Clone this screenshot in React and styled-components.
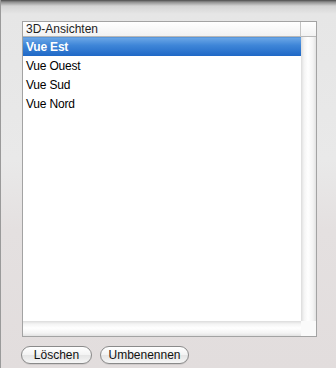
import React from 'react'
import styled, { createGlobalStyle } from 'styled-components'

const GlobalStyle = createGlobalStyle`
  html, body {
    margin: 0;
    padding: 0;
  }
  body {
    font-family: "Lucida Grande", "Liberation Sans", Arial, sans-serif;
  }
`

const views = ['Vue Est', 'Vue Ouest', 'Vue Sud', 'Vue Nord']

const Window = styled.div`
  width: 336px;
  height: 368px;
  box-sizing: border-box;
  padding: 21px 0 0 21px;
  overflow: hidden;
  background: linear-gradient(
    180deg,
    #4a4a4a 0px,
    #8e8e8e 2px,
    #d4d4d4 6px,
    #e6e6e6 14px,
    #e9e9e9 160px,
    #e4e0e0 230px,
    #e2dddd 368px
  );
  border-left: 1px solid #9a9a9a;
`

const ListBox = styled.div`
  width: 295px;
  height: 316px;
  box-sizing: border-box;
  border: 1px solid #a3a3a3;
  background: #fff;
  display: grid;
  grid-template-columns: 1fr 15px;
  grid-template-rows: 15px 1fr 15px;
`

const Header = styled.div`
  display: flex;
  align-items: center;
  padding-left: 3px;
  font-size: 12px;
  color: #1e1e1e;
  background: linear-gradient(180deg, #ffffff, #f2f2f2);
  border-bottom: 1px solid #b8b8b8;
  border-right: 1px solid #c4c4c4;
`

const Corner = styled.div`
  background: ${(p) => (p.$bottom ? '#fafafa' : 'linear-gradient(180deg, #ffffff, #f2f2f2)')};
  border-bottom: 1px solid ${(p) => (p.$bottom ? 'transparent' : '#b8b8b8')};
`

const Rows = styled.div`
  display: flex;
  flex-direction: column;
`

const Row = styled.div`
  height: 19px;
  box-sizing: border-box;
  display: flex;
  align-items: center;
  padding-left: 3px;
  font-size: 12px;
  letter-spacing: -0.2px;
  color: ${(p) => (p.$selected ? '#fff' : '#000')};
  font-weight: ${(p) => (p.$selected ? 700 : 400)};
  background: ${(p) =>
    p.$selected
      ? 'linear-gradient(180deg, #6aa6e6 0%, #3f86d8 40%, #1f68c6 100%)'
      : 'transparent'};
  border-top: ${(p) => (p.$selected ? '1px solid #5a97da' : '1px solid transparent')};
`

const VTrack = styled.div`
  background: linear-gradient(
    90deg,
    #dcdcdc 0px,
    #f4f4f4 3px,
    #ffffff 7px,
    #f4f4f4 12px,
    #e2e2e2 15px
  );
`

const HTrack = styled.div`
  background: linear-gradient(
    180deg,
    #dcdcdc 0px,
    #f4f4f4 3px,
    #ffffff 7px,
    #f4f4f4 12px,
    #e2e2e2 15px
  );
`

const Buttons = styled.div`
  display: flex;
  gap: 8px;
  margin-top: 9px;
  margin-left: -1px;
`

const Button = styled.button`
  width: ${(p) => p.$width}px;
  height: 18px;
  padding: 0;
  border: 1px solid #8a8a8a;
  border-radius: 9px;
  font-family: "Lucida Grande", "Liberation Sans", Arial, sans-serif;
  font-size: 12px;
  color: #111;
  line-height: 16px;
  background: linear-gradient(180deg, #ffffff 0%, #f3f3f3 50%, #e4e4e4 51%, #f6f6f6 100%);
  box-shadow: 0 1px 0 rgba(0, 0, 0, 0.08);
`

export default function App() {
  return (
    <>
      <GlobalStyle />
      <Window>
        <ListBox>
          <Header>3D-Ansichten</Header>
          <Corner />
          <Rows>
            {views.map((v, i) => (
              <Row key={v} $selected={i === 0}>
                {v}
              </Row>
            ))}
          </Rows>
          <VTrack />
          <HTrack />
          <Corner $bottom />
        </ListBox>
        <Buttons>
          <Button $width={71}>Löschen</Button>
          <Button $width={89}>Umbenennen</Button>
        </Buttons>
      </Window>
    </>
  )
}
